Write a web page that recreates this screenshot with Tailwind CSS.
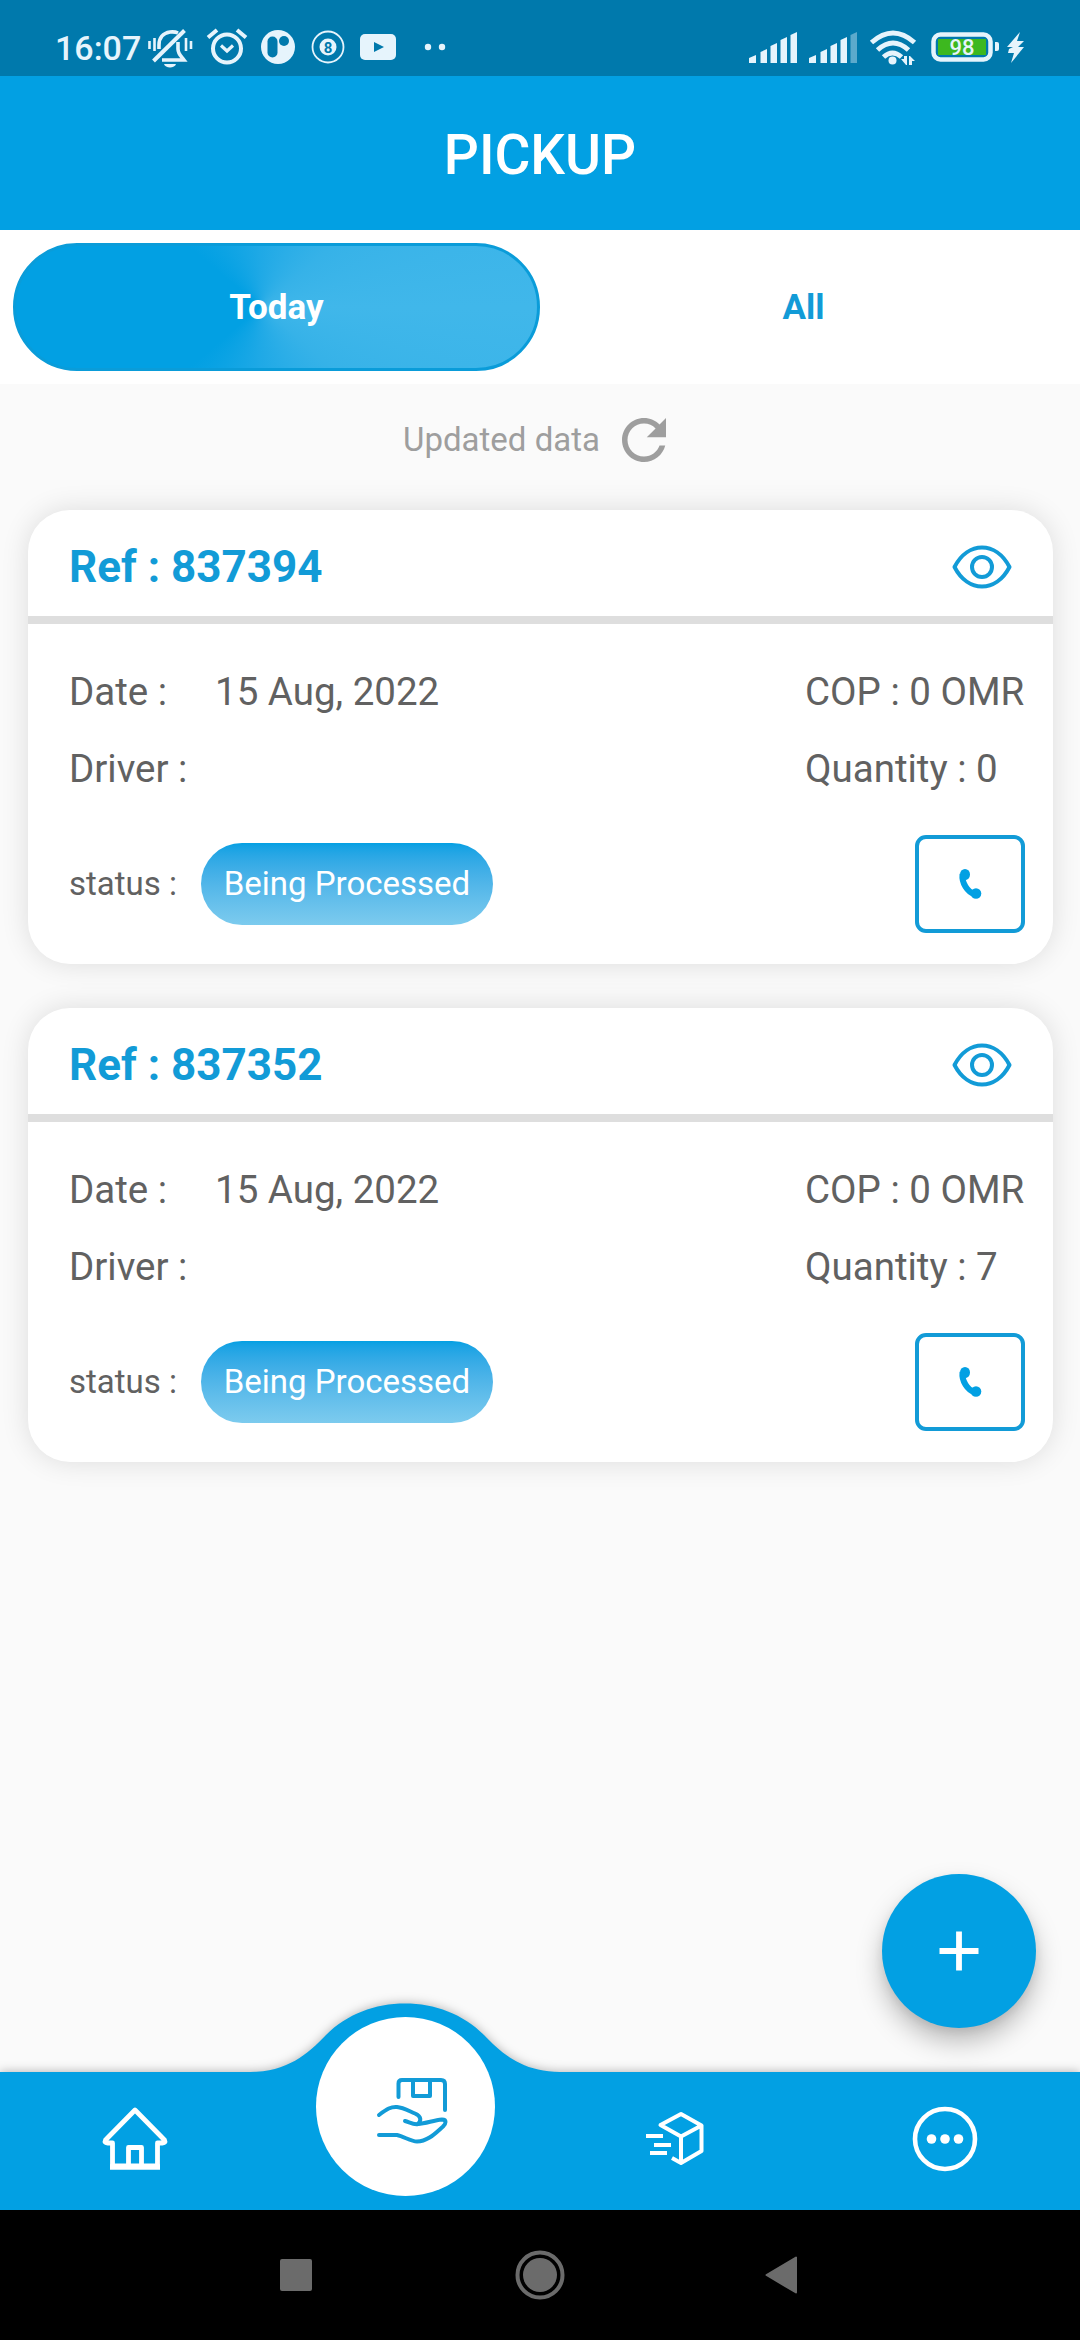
<!DOCTYPE html>
<html lang="en">
<head>
<meta charset="utf-8">
<title>Pickup</title>
<script src="https://cdn.jsdelivr.net/npm/@tailwindcss/browser@4"></script>
</head>
<body>
<div class="flex h-[2340px] w-[1080px] flex-col overflow-hidden bg-[#fafafa] font-[Roboto,sans-serif]">

  <!-- Status bar -->
  <div class="flex h-[76px] items-start justify-between bg-[#0079ac] text-[#e6f4fc]">
    <div class="flex pt-[26px] pl-[55px]">
      <span class="w-[89px] text-[34px] leading-[44px] font-medium whitespace-nowrap">16:07</span>
      <svg class="h-[44px] w-[310px]" viewBox="144 26 310 44" fill="none" stroke="currentColor">
        <!-- muted bell -->
        <path d="M153.500 61 184.500 30.500" stroke-width="4"/>
        <path d="M159 49v-4c0-7 4-12 11-13 4-.500 6 0 8 1M162 60h22c-3-4-6-6-6-11v-7" stroke-width="3.600"/>
        <path d="M164 64h12c-1 4.500-11 4.500-12 0z" fill="currentColor" stroke="none"/>
        <path d="M149.500 41v8M154.500 38v13M186 38v13M191 41v8" stroke-width="2.600"/>
        <!-- alarm -->
        <circle cx="227" cy="48.500" r="14" stroke-width="4"/>
        <path d="M221 45.500l6 5.500 6-5.500" stroke-width="3.200"/>
        <path d="M208 37.500l9-7.500M246 37.500l-9-7.500" stroke-width="4"/>
        <!-- app badge -->
        <circle cx="278" cy="47" r="17" fill="currentColor" stroke="none"/>
        <rect x="267.500" y="36.500" width="10" height="21" rx="5" fill="#0079ac" stroke="none"/>
        <circle cx="284" cy="41" r="5" fill="#0079ac" stroke="none"/>
        <!-- eight ball -->
        <circle cx="328" cy="47" r="15.500" stroke-width="1.800"/>
        <circle cx="328" cy="47" r="8.500" fill="currentColor" stroke="none"/>
        <text x="328" y="52.500" text-anchor="middle" font-size="15" font-weight="700" fill="#0079ac" stroke="none">8</text>
        <!-- video -->
        <rect x="360" y="34" width="36" height="26" rx="5" fill="currentColor" stroke="none"/>
        <path d="M374 42l10 5-10 5z" fill="#0079ac" stroke="none"/>
        <circle cx="428" cy="47" r="3.200" fill="currentColor" stroke="none"/>
        <circle cx="442" cy="47" r="3.200" fill="currentColor" stroke="none"/>
      </svg>
    </div>
    <svg class="mt-[26px] mr-[52px] h-[44px] w-[284px]" viewBox="744 26 284 44" fill="currentColor">
      <path d="M749 58l7-3v8h-7zM760.500 52l6.500-3v14h-6.500zM770.500 46l6.500-3v20h-6.500zM780.500 40l6.500-3v26h-6.500zM790.500 35l6.500-3v31h-6.500z"/>
      <path d="M809 58l7-3v8h-7zM820.500 52l6.500-3v14h-6.500zM830.500 46l6.500-3v20h-6.500zM840.500 40l6.500-3v26h-6.500z"/>
      <path d="M850.500 35l6.500-3v31h-6.500z" opacity=".4"/>
      <g fill="none" stroke="currentColor" stroke-width="5">
        <path d="M871.500 42.500q21.500-19 43 0"/>
        <path d="M877.500 50q15.500-14 31 0"/>
        <path d="M883.500 57q9-8 18 0"/>
      </g>
      <circle cx="892.500" cy="60.500" r="4"/>
      <path d="M901 59h3v-3h3v9h-1zM909 65v-9h1l5 5h-3v4z"/>
      <rect x="933.500" y="34.500" width="57" height="25" rx="7" fill="none" stroke="currentColor" stroke-width="4.500"/>
      <rect x="938" y="39" width="48" height="16" fill="#3db81f"/>
      <path d="M995 42h2a2 2 0 0 1 2 2v5a2 2 0 0 1-2 2h-2z"/>
      <text x="962" y="55" text-anchor="middle" font-size="22" font-weight="500">98</text>
      <path d="M1020 32l-13 15h6l-4 2-1 4h6l-3 10 13-16h-6l6-6h-7z"/>
    </svg>
  </div>

  <header class="flex h-[154px] items-center justify-center bg-[#02a0e3] pt-[5px] text-[55px] font-medium text-white">PICKUP</header>

  <!-- Tabs -->
  <div class="grid h-[154px] grid-cols-2 bg-white p-[13px] text-[35px] font-bold">
    <div class="flex items-center justify-center rounded-full border-[3px] border-[#0a9cd9] bg-[conic-gradient(from_0deg_at_47%_50%,#1fa9e6_0deg,#36b2e8_50deg,#40b7ea_90deg,#36b2e8_130deg,#1fa9e6_180deg,#02a0e3_230deg,#02a0e3_310deg,#1fa9e6_360deg)] pt-[2px] text-white">Today</div>
    <div class="flex items-center justify-center pt-[2px] text-[#129bd7]">All</div>
  </div>

  <main class="relative flex flex-1 flex-col px-[28px]">
    <div class="flex h-[110px] items-center justify-center gap-[11px] pt-[2px] text-[33px] text-[#9e9e9e]">
      <span>Updated data</span>
      <svg class="size-[66px]" viewBox="0 0 24 24" fill="currentColor"><path d="M17.650 6.350C16.200 4.900 14.210 4 12 4c-4.420 0-7.990 3.580-7.990 8s3.570 8 7.990 8c3.730 0 6.840-2.550 7.730-6h-2.080c-.820 2.330-3.040 4-5.650 4-3.310 0-6-2.690-6-6s2.690-6 6-6c1.660 0 3.140.690 4.220 1.780L13 11h7V4l-2.350 2.350z"/></svg>
    </div>

    <div class="flex w-[1025px] flex-col gap-[44px] pt-[16px]">
      <article class="h-[454px] rounded-[42px] bg-white text-[#616161] shadow-[0_0_28px_rgba(0,0,0,0.12)]">
        <div class="flex h-[114px] items-center justify-between border-b-8 border-[#dedede] pt-[8px] pr-[40px] pl-[41px] text-[44px] font-bold text-[#129bd7]">
          <span>Ref : 837394</span>
          <svg class="h-[46px] w-[62px]" viewBox="0 0 62 46" fill="none" stroke="currentColor" stroke-width="4"><path d="M3.500 23C17-3 45-3 58.500 23 45 49 17 49 3.500 23z" stroke-linejoin="round"/><circle cx="31" cy="23" r="10"/></svg>
        </div>
        <div class="flex h-[184px] justify-between pt-[29px] pl-[41px] text-[38.500px]">
          <div class="leading-[77px]"><div class="flex"><span class="w-[146px]">Date :</span><span>15 Aug, 2022</span></div><div>Driver :</div></div>
          <div class="w-[248px] leading-[77px] whitespace-nowrap"><div>COP : 0 OMR</div><div>Quantity : 0</div></div>
        </div>
        <div class="flex items-center pt-[27px] pr-[28px] pl-[41px] text-[33px]">
          <span class="w-[132px]">status :</span>
          <span class="flex h-[82px] w-[292px] items-center justify-center rounded-full bg-linear-to-b from-[#02a0e3] to-[#7ccbee] text-white">Being Processed</span>
          <span class="ml-auto flex h-[98px] w-[110px] items-center justify-center rounded-[11px] border-4 border-[#129bd7] text-[#02a0e3]">
            <svg class="h-[32px] w-[24px]" viewBox="0 0 24 32" fill="none" stroke="currentColor"><path d="M4.500 6c-1 9 5 18 12 20" stroke-width="6"/><ellipse cx="7" cy="6.500" rx="5" ry="5.500" fill="currentColor" stroke="none"/><ellipse cx="18" cy="25.500" rx="5.300" ry="5.300" fill="currentColor" stroke="none"/></svg>
          </span>
        </div>
      </article>

      <article class="h-[454px] rounded-[42px] bg-white text-[#616161] shadow-[0_0_28px_rgba(0,0,0,0.12)]">
        <div class="flex h-[114px] items-center justify-between border-b-8 border-[#dedede] pt-[8px] pr-[40px] pl-[41px] text-[44px] font-bold text-[#129bd7]">
          <span>Ref : 837352</span>
          <svg class="h-[46px] w-[62px]" viewBox="0 0 62 46" fill="none" stroke="currentColor" stroke-width="4"><path d="M3.500 23C17-3 45-3 58.500 23 45 49 17 49 3.500 23z" stroke-linejoin="round"/><circle cx="31" cy="23" r="10"/></svg>
        </div>
        <div class="flex h-[184px] justify-between pt-[29px] pl-[41px] text-[38.500px]">
          <div class="leading-[77px]"><div class="flex"><span class="w-[146px]">Date :</span><span>15 Aug, 2022</span></div><div>Driver :</div></div>
          <div class="w-[248px] leading-[77px] whitespace-nowrap"><div>COP : 0 OMR</div><div>Quantity : 7</div></div>
        </div>
        <div class="flex items-center pt-[27px] pr-[28px] pl-[41px] text-[33px]">
          <span class="w-[132px]">status :</span>
          <span class="flex h-[82px] w-[292px] items-center justify-center rounded-full bg-linear-to-b from-[#02a0e3] to-[#7ccbee] text-white">Being Processed</span>
          <span class="ml-auto flex h-[98px] w-[110px] items-center justify-center rounded-[11px] border-4 border-[#129bd7] text-[#02a0e3]">
            <svg class="h-[32px] w-[24px]" viewBox="0 0 24 32" fill="none" stroke="currentColor"><path d="M4.500 6c-1 9 5 18 12 20" stroke-width="6"/><ellipse cx="7" cy="6.500" rx="5" ry="5.500" fill="currentColor" stroke="none"/><ellipse cx="18" cy="25.500" rx="5.300" ry="5.300" fill="currentColor" stroke="none"/></svg>
          </span>
        </div>
      </article>
    </div>

    <!-- Add button -->
    <button class="absolute right-[44px] bottom-[44px] flex size-[154px] items-center justify-center rounded-full bg-[#02a0e3] shadow-[0_14px_26px_rgba(0,0,0,0.25),0_4px_10px_rgba(0,0,0,0.08)]">
      <svg class="size-[40px]" viewBox="0 0 40 40" fill="none" stroke="white" stroke-width="5.800"><path d="M20 .500v39M.500 20h39"/></svg>
    </button>
  </main>

  <!-- Bottom navigation -->
  <nav class="relative h-[138px]">
    <svg class="absolute bottom-0 left-0 h-[238px] w-[1080px] drop-shadow-[0_-1px_5px_rgba(0,0,0,0.25)]" viewBox="0 1972 1080 238">
      <path d="M0 2072H250C287 2072 308 2054 326 2035C347 2014 375 2003.500 405 2003.500S463 2014 484 2035C502 2054 523 2072 560 2072H1080V2210H0z" fill="#02a0e3"/>
    </svg>
    <div class="relative grid h-full grid-cols-4 justify-items-center text-white">
      <svg class="mt-[34px] h-[66px] w-[68px]" viewBox="101 2106 68 66" fill="none" stroke="currentColor" stroke-width="4.800">
        <path d="M135 2110l29.500 30q1.500 3-2 3H157.500V2166H112.500V2143H107.500q-3.500 0-2-3z" stroke-linejoin="round"/>
        <path d="M110 2167h50" stroke-width="5.400"/>
        <path d="M128.500 2167V2147.500h13V2167" stroke-linejoin="round"/>
      </svg>
      <div class="-mt-[55px] flex size-[179px] items-center justify-center rounded-full bg-white pt-[6px] pl-[13px] text-[#129bd7]">
        <svg class="h-[68px] w-[74px]" viewBox="375 2076 74 68" fill="none" stroke="currentColor" stroke-width="4" stroke-linecap="round" stroke-linejoin="round">
          <path d="M398.500 2097V2083.500q0-3.500 3.500-3.500H441q4 0 4 4V2110"/>
          <path d="M413 2081V2096h17V2081"/>
          <path d="M379 2115c8-6 12-8.500 18-8 6 .500 12 4 18 6.500 7 3 6 7.500 3 10.500-4 1-8-1.500-13-3"/>
          <path d="M418 2124c8-.500 15-3.500 24-4.500 5 0 4 4 1 7-7 6-15 15-26 15-6 0-13-5-20-6.500H379"/>
        </svg>
      </div>
      <svg class="mt-[38px] h-[58px] w-[60px]" viewBox="645 2110 60 58" fill="none" stroke="currentColor" stroke-width="4" stroke-linejoin="round">
        <path d="M681 2114l20.500 11.500-20.500 11-20.500-11.500zM701.500 2125.500V2151L681 2163l-9-5M681 2136.500V2163"/>
        <path d="M646 2136h17M654 2145h17M650 2153h17" stroke-width="4.200"/>
      </svg>
      <svg class="mt-[33px] size-[68px]" viewBox="911 2104.500 68 68" fill="none" stroke="currentColor" stroke-width="4.600">
        <circle cx="945" cy="2138.500" r="30"/>
        <g fill="currentColor" stroke="none"><circle cx="931.500" cy="2138.500" r="4.800"/><circle cx="945" cy="2138.500" r="4.800"/><circle cx="958.500" cy="2138.500" r="4.800"/></g>
      </svg>
    </div>
  </nav>

  <!-- System navigation -->
  <div class="flex h-[130px] items-center justify-between bg-black px-[270px] text-[#6b6b6b]">
    <span class="ml-[10px] size-[32px] rounded-[2px] bg-current"></span>
    <svg class="ml-[3px] size-[50px]" viewBox="0 0 50 50"><circle cx="25" cy="25" r="22.500" fill="none" stroke="currentColor" stroke-width="4"/><circle cx="25" cy="25" r="17" fill="currentColor"/></svg>
    <svg class="mr-[13px] h-[38px] w-[32px]" viewBox="0 0 32 38" fill="currentColor" stroke="currentColor" stroke-width="2" stroke-linejoin="round"><path d="M31 1.500v35L1.500 19z"/></svg>
  </div>
</div>
</body>
</html>
